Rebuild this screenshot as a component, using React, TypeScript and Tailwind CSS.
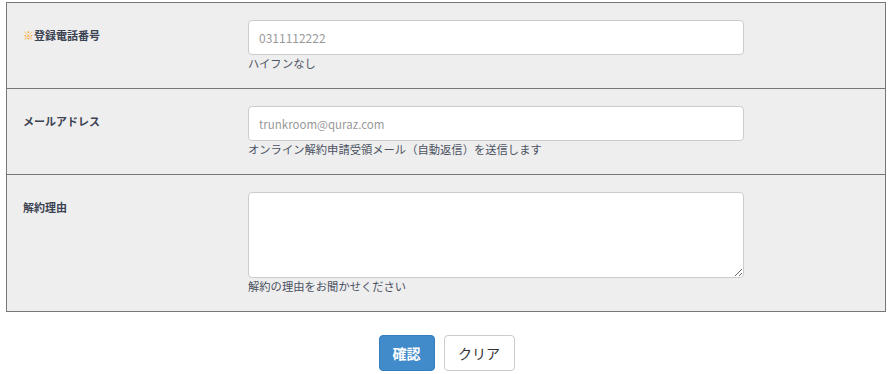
const font = { fontFamily: '"Noto Sans CJK JP", "Noto Sans", sans-serif' };

const Row = ({
  label,
  required,
  children,
  note,
}: {
  label: string;
  required?: boolean;
  children: React.ReactNode;
  note: string;
}) => {
  return (
    <div className="flex border-t border-[#777] bg-[#eeeeee]">
      <div className="w-[241px] shrink-0 pl-[16px] pt-[24px] text-[11px] font-bold leading-[16px] text-[#3b4252]">
        {required && <span className="text-[#f5a623]">※</span>}
        {label}
      </div>
      <div className="pt-[17px] pb-[17px]">
        {children}
        <p className="text-[11.3px] leading-[16px] text-[#4b5262]">{note}</p>
      </div>
    </div>
  );
};

const App = () => {
  return (
    <div className="w-[893px] h-[374px] bg-white pt-[2px]" style={font}>
      <div className="ml-[6px] w-[880px] border-x border-b border-[#777]">
        <Row label="登録電話番号" required note="ハイフンなし">
          <input
            className="block w-[496px] h-[35px] rounded-[4px] border border-[#cccccc] bg-white px-[10px] text-[12px] outline-none placeholder:text-[#999]"
            placeholder="0311112222"
          />
        </Row>
        <Row
          label="メールアドレス"
          note="オンライン解約申請受領メール（自動返信）を送信します"
        >
          <input
            className="block w-[496px] h-[35px] rounded-[4px] border border-[#cccccc] bg-white px-[10px] text-[11.5px] outline-none placeholder:text-[#999]"
            placeholder="trunkroom@quraz.com"
          />
        </Row>
        <Row label="解約理由" note="解約の理由をお聞かせください">
          <textarea className="block w-[496px] h-[86px] rounded-[4px] border border-[#cccccc] bg-white px-[10px] py-[6px] text-[12px] outline-none" />
        </Row>
      </div>
      <div className="flex justify-center gap-[9px] pt-[23px]">
        <button className="h-[36px] w-[56px] rounded-[4px] border border-[#357ebd] bg-[#428bca] text-[14px] font-bold text-white">
          確認
        </button>
        <button className="h-[36px] w-[71px] rounded-[4px] border border-[#cccccc] bg-white text-[14px] text-[#333]">
          クリア
        </button>
      </div>
    </div>
  );
};

export default App;
